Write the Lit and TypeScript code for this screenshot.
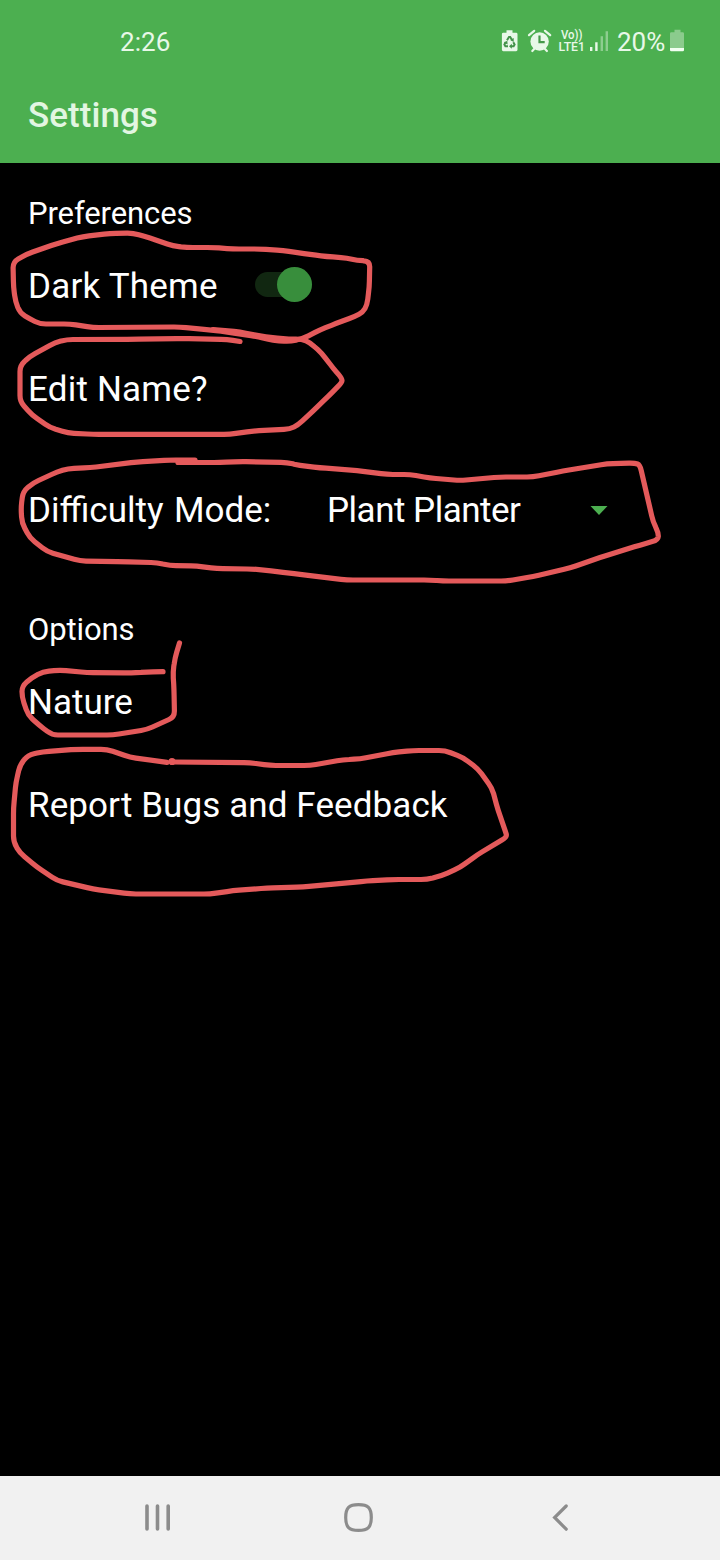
import { LitElement, html, css, svg } from "lit";
import { customElement } from "lit/decorators.js";

type Point = [number, number];

/** Turns a list of points into a pen path whose corners are slightly rounded. */
function penPath(points: Point[], radius = 6): string {
  let d = `M${points[0][0]} ${points[0][1]}`;
  for (let i = 1; i < points.length - 1; i++) {
    const [px, py] = points[i - 1];
    const [x, y] = points[i];
    const [nx, ny] = points[i + 1];
    const a = Math.hypot(px - x, py - y);
    const b = Math.hypot(nx - x, ny - y);
    const ra = Math.min(radius, a / 2) / a;
    const rb = Math.min(radius, b / 2) / b;
    d += `L${(x + (px - x) * ra).toFixed(1)} ${(y + (py - y) * ra).toFixed(1)}`;
    d += `Q${x} ${y} ${(x + (nx - x) * rb).toFixed(1)} ${(y + (ny - y) * rb).toFixed(1)}`;
  }
  const last = points[points.length - 1];
  return d + `L${last[0]} ${last[1]}`;
}

const STROKES: Point[][] = [
  [[213, 330], [240, 334], [257, 336.5], [273, 340.5], [290, 341.5], [303, 338.5], [320, 330], [337, 323], [355, 316.5], [363, 312], [367, 305], [369.3, 287], [369.8, 261], [357, 260.5], [347, 258], [327, 256.5], [310, 254.5], [283, 250.5], [260, 249], [233, 249], [213, 247.5], [187, 247.5], [173, 246], [150, 238], [133, 233], [110, 233.5], [83, 236.5], [57, 243.5], [27, 254], [13, 262], [13.5, 287], [15.5, 301.5], [20, 313], [30, 319], [40, 324], [70, 324], [93, 327.5], [180, 327], [210, 330], [240, 333]],
  [[240, 341.5], [227, 339.5], [183, 338.5], [133, 339.3], [67, 339.5], [55, 342.5], [30, 356.5], [20, 365.5], [20, 401.5], [32, 415], [50, 427.5], [68, 433], [93, 434.3], [230, 434.3], [253, 431], [290, 429], [298, 425], [313, 411], [328, 396.5], [342, 382.5], [342, 378.5], [333, 368], [322, 353.5], [310, 342.5], [302, 339], [283, 339], [260, 336], [240, 332], [213, 329.5]],
  [[195, 460], [170, 460], [137, 462], [90, 467.7], [68, 468.5], [57, 472], [33, 483], [23, 491.5], [21, 508], [22, 523], [30, 538], [47, 551.5], [80, 561], [123, 561.7], [157, 562.7], [170, 565.5], [197, 566], [217, 568.7], [253, 569], [277, 571.5], [300, 574.5], [347, 580], [430, 580], [443, 581], [507, 581], [533, 576.5], [570, 568], [600, 557.5], [640, 545], [658, 540], [658.5, 533], [653, 521.5], [640, 465], [635, 463], [607, 463.7], [563, 471], [533, 477], [500, 477], [460, 480.5], [430, 478], [410, 474.5], [387, 474.5], [357, 470.5], [320, 467.8], [300, 465.5], [287, 462.5], [240, 461.5], [220, 462.5], [178, 462.5]],
  [[163, 671.7], [147, 672], [130, 673], [87, 672.5], [60, 670.2], [43, 671.7], [32, 677.5], [22, 686], [22, 697], [28, 715], [39, 725], [52, 735], [113, 735], [147, 729.5], [174.5, 717], [174, 690], [173, 672], [175, 658], [179.5, 643]],
  [[167, 762.3], [130, 757.3], [107, 749.3], [77, 749.3], [43, 751.7], [28, 755], [20, 765], [16, 782], [13.5, 808], [13.5, 842], [20, 853], [37, 867], [57, 880.5], [93, 889], [130, 894], [210, 894], [233, 890.7], [267, 888], [303, 887], [367, 881], [393, 879.5], [427, 879.5], [442, 875.5], [460, 867.5], [477, 855], [507, 837], [505.5, 831.5], [498, 810], [492, 788], [478, 769], [463, 757.5], [445, 750.5], [413, 750.5], [393, 752.5], [360, 759], [343, 759.7], [310, 765.5], [270, 765.5], [250, 762.7], [173, 762]],
];

@customElement("status-bar")
class StatusBar extends LitElement {
  static styles = css`
    :host { display: flex; height: 84px; box-sizing: border-box; padding-left: 120px; color: #e8f8e8; font-size: 26px; }
    .time, .level { line-height: 84px; }
    .time { flex: 1; letter-spacing: 0.1px; }
    .icons { display: block; width: 114px; height: 84px; flex: none; }
    .volte { font: 500 12px Roboto, "Noto Sans", sans-serif; }
    .level { width: 53px; margin-left: 3px; }
    .battery { display: block; width: 50px; height: 84px; }
  `;
  render() {
    return html`
      <span class="time">2:26</span>
      <svg class="icons" viewBox="500 0 114 84" fill="#e8f8e8">
        <path d="M506.500 30.200h6v2.600h3.600a1.400 1.400 0 0 1 1.400 1.400v15.600a1.400 1.400 0 0 1-1.400 1.400h-12.800a1.400 1.400 0 0 1-1.400-1.400V34.200a1.400 1.400 0 0 1 1.400-1.400h3.200z" />
        <g fill="none" stroke="#43924a" stroke-width="2">
          <path d="M507 40.200l2-3.200h1.200l2 3.200M513.300 42.200l1.300 2.300-1 1.800h-2.600M508 46.300h-2.600l-1-1.800 1.400-2.400" />
        </g>
        <path fill="#43924a" d="M513.700 38v3.900l-3.500-1.800zM511.800 43.800v5l-2.800-2.500zM503.900 42.500l3.400-1.700.3 3.700z" />
        <circle cx="539.600" cy="41.500" r="9.200" />
        <path d="M539.500 35.500v6.600h5.200" fill="none" stroke="#45994a" stroke-width="2.200" />
        <path d="M529 35.200l5.200-4.400M550.200 35.200l-5.200-4.400M532.300 51l3-3.200M546.900 51l-3-3.200" stroke="#e8f8e8" stroke-width="2.200" stroke-linecap="round" />
        <text class="volte" x="561" y="38.800" textLength="21.500" lengthAdjust="spacingAndGlyphs">Vo))</text>
        <text class="volte" x="558.500" y="51" textLength="26.500" lengthAdjust="spacingAndGlyphs">LTE1</text>
        <path d="M590 47h2.400v4H590zM595.200 42.200h2.400V51h-2.400z" />
        <path opacity=".42" d="M600.600 36.200h2.400V51h-2.400zM605.600 31.200h2.400V51h-2.400z" />
      </svg>
      <span class="level">20%</span>
      <svg class="battery" viewBox="670 0 50 84">
        <path fill="#8bcb8d" d="M674.500 29.800h6v2.500h2.200a1.300 1.300 0 0 1 1.300 1.300V48h-14V33.600a1.300 1.300 0 0 1 1.300-1.300h3.200z" />
        <path fill="#f2fff2" d="M670 48h14v2a1.200 1.200 0 0 1-1.200 1.200h-11.600A1.200 1.200 0 0 1 670 50z" />
      </svg>
    `;
  }
}

@customElement("toggle-switch")
class ToggleSwitch extends LitElement {
  static styles = css`
    :host { display: flex; align-items: center; justify-content: flex-end; width: 57px; height: 35px; }
    .track { width: 57px; height: 25px; border-radius: 13px; background: #112711; display: flex; align-items: center; justify-content: flex-end; }
    .thumb { width: 35px; height: 35px; flex: none; border-radius: 50%; background: #388e3c; }
  `;
  render() {
    return html`<div class="track"><div class="thumb"></div></div>`;
  }
}

@customElement("nav-bar")
class NavBar extends LitElement {
  static styles = css`
    :host { display: flex; height: 84px; background: #f1f1f1; justify-content: space-between; align-items: center; padding: 0 142px; box-sizing: border-box; }
    .icon { display: block; width: 32px; height: 32px; fill: none; stroke: #8c8c8c; stroke-width: 3.6; stroke-linecap: round; }
    .thin { stroke-width: 3.2; }
  `;
  render() {
    return html`
      <svg class="icon" viewBox="142 1502 32 32"><path d="M147 1506v23M157.500 1506v23M168.200 1506v23" /></svg>
      <svg class="icon thin" viewBox="344 1502 32 32"><path d="M358.500 1504.600c9.500 0 12.800 3.300 12.800 12.900s-3.300 12.900-12.800 12.900-12.800-3.300-12.800-12.900 3.300-12.900 12.800-12.900z" /></svg>
      <svg class="icon thin" viewBox="546 1502 32 32"><path d="M566.200 1506l-11.600 11.500 11.600 11.700" /></svg>
    `;
  }
}

@customElement("app-root")
class AppRoot extends LitElement {
  static styles = css`
    :host { display: flex; flex-direction: column; position: relative; height: 1560px; width: 720px; overflow: hidden; background: #000; color: #fff; font-family: Roboto, "Noto Sans", sans-serif; }
    .top { background: #4caf50; height: 163px; flex: none; }
    .title { margin: 0; padding-left: 28px; font-size: 35px; font-weight: 500; line-height: 64px; letter-spacing: 0.05px; color: #e2f6e2; }
    .content { flex: 1; padding: 28px 28px 0; }
    .section { display: flex; flex-direction: column; gap: 33px; }
    .section + .section { margin-top: 61px; }
    .heading { margin: 0 0 -18px; font-size: 31px; font-weight: 400; line-height: 46px; letter-spacing: -0.1px; }
    .row { display: flex; align-items: center; height: 70px; font-size: 35px; line-height: 70px; white-space: nowrap; }
    .dark { width: 227px; letter-spacing: 0.22px; }
    .name { letter-spacing: 0.2px; }
    .report { letter-spacing: 0.09px; }
    .switch { margin-bottom: 5px; }
    .mode { margin-top: 18px; }
    .mode-label { width: 299px; word-spacing: 1.8px; }
    .mode-value { width: 263px; letter-spacing: -0.5px; }
    .arrow { display: block; width: 18px; height: 9px; margin-bottom: 2px; fill: #4caf50; }
    .ink { position: absolute; left: 0; top: 0; width: 720px; height: 1560px; pointer-events: none; fill: none; stroke: #e45a5b; stroke-width: 5.2; stroke-linecap: round; stroke-linejoin: round; }
    .dot { fill: #e45a5b; stroke: none; }
  `;
  render() {
    return html`
      <header class="top">
        <status-bar></status-bar>
        <h1 class="title">Settings</h1>
      </header>
      <main class="content">
        <section class="section">
          <h2 class="heading">Preferences</h2>
          <div class="row"><span class="dark">Dark Theme</span><toggle-switch class="switch"></toggle-switch></div>
          <div class="row name">Edit Name?</div>
          <div class="row mode">
            <span class="mode-label">Difficulty Mode:</span>
            <span class="mode-value">Plant Planter</span>
            <svg class="arrow" viewBox="0 0 18 9"><path d="M0.500 0h17L9 9z" /></svg>
          </div>
        </section>
        <section class="section">
          <h2 class="heading">Options</h2>
          <div class="row">Nature</div>
          <div class="row report">Report Bugs and Feedback</div>
        </section>
      </main>
      <nav-bar></nav-bar>
      <svg class="ink" viewBox="0 0 720 1560">
        ${STROKES.map((points) => svg`<path d=${penPath(points)} />`)}
        <circle class="dot" cx="172" cy="761.500" r="3.600" />
      </svg>
    `;
  }
}
